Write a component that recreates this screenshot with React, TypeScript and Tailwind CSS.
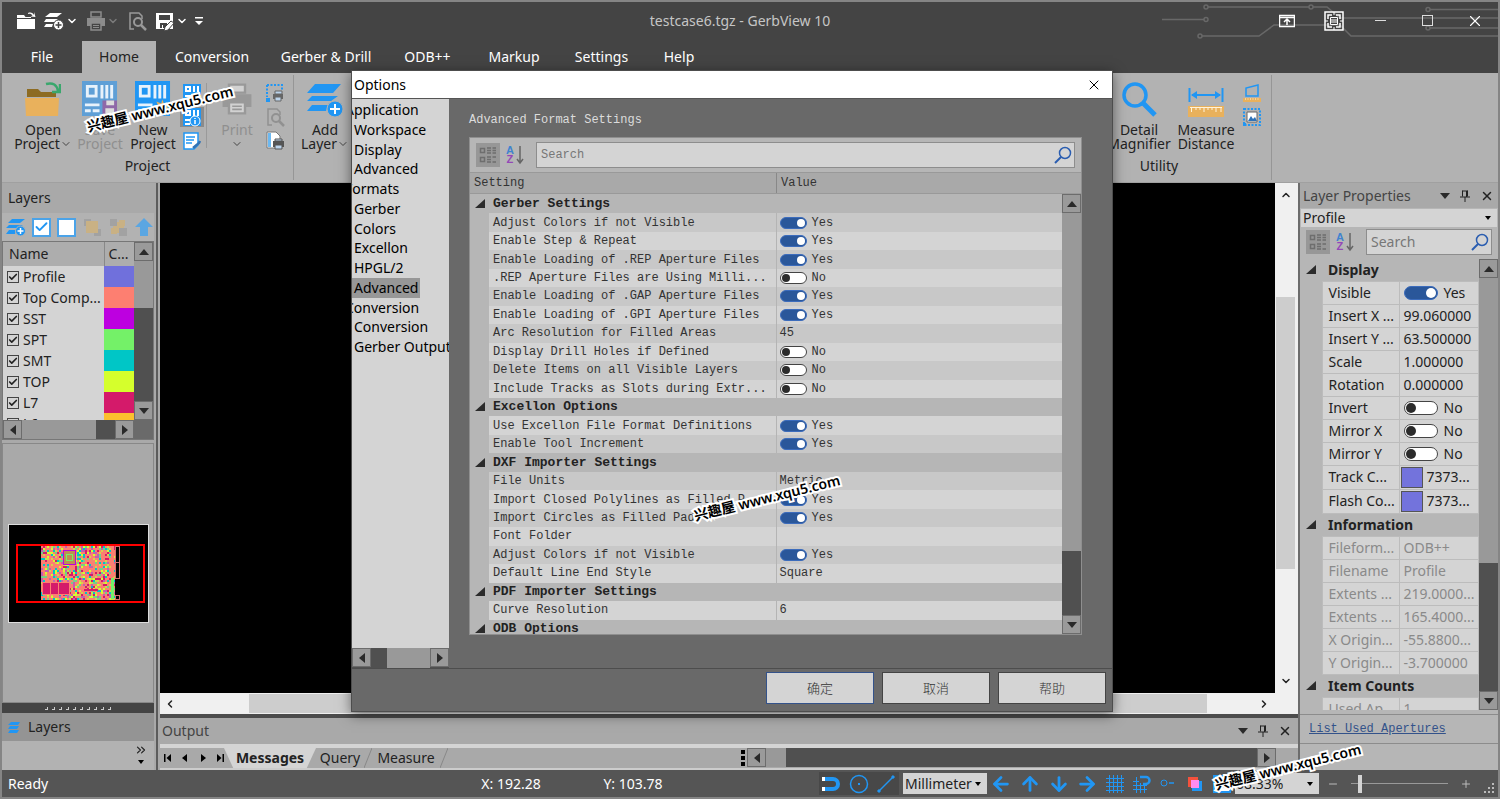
import { PropsWithChildren, ReactNode, useState } from 'react';
import {
  ArrowDown,
  ArrowLeft,
  ArrowRight,
  ArrowUp,
  Check,
  ChevronDown,
  ChevronLeft,
  ChevronRight,
  ChevronsRight,
  ChevronUp,
  Minus,
  Plus,
  X,
} from 'lucide-react';
import { clsx } from 'clsx';

const BLUE = '#2196f3';

const TABS = [
  { label: 'File', className: 'w-20 text-white' },
  { label: 'Home', className: 'w-[74px] bg-[#b2b2b2] text-[#222]' },
  { label: 'Conversion', className: 'w-28 text-white' },
  { label: 'Gerber & Drill', className: 'w-[116px] text-white' },
  { label: 'ODB++', className: 'w-[87px] text-white' },
  { label: 'Markup', className: 'w-[86px] text-white' },
  { label: 'Settings', className: 'w-[89px] text-white' },
  { label: 'Help', className: 'w-[66px] text-white' },
];

const LAYERS = [
  { name: 'Profile', color: 'bg-[#7070dc]' },
  { name: 'Top Comp...', color: 'bg-[#fd7f71]' },
  { name: 'SST', color: 'bg-[#bd00e0]' },
  { name: 'SPT', color: 'bg-[#74f168]' },
  { name: 'SMT', color: 'bg-[#00c6c6]' },
  { name: 'TOP', color: 'bg-[#d5ff2c]' },
  { name: 'L7', color: 'bg-[#d41a6a]' },
  { name: 'L6', color: 'bg-[#fcc02e]' },
];

const TREE = [
  { label: 'Application', root: true },
  { label: 'Workspace' },
  { label: 'Display' },
  { label: 'Advanced' },
  { label: 'Formats', root: true },
  { label: 'Gerber' },
  { label: 'Colors' },
  { label: 'Excellon' },
  { label: 'HPGL/2' },
  { label: 'Advanced', selected: true },
  { label: 'Conversion', root: true },
  { label: 'Conversion' },
  { label: 'Gerber Output' },
];

type Value = string | boolean;
type SettingsGroup = { title: string; rows: [string, Value][] };

const SETTINGS: SettingsGroup[] = [
  {
    title: 'Gerber Settings',
    rows: [
      ['Adjust Colors if not Visible', true],
      ['Enable Step & Repeat', true],
      ['Enable Loading of .REP Aperture Files', true],
      ['.REP Aperture Files are Using Milli...', false],
      ['Enable Loading of .GAP Aperture Files', true],
      ['Enable Loading of .GPI Aperture Files', true],
      ['Arc Resolution for Filled Areas', '45'],
      ['Display Drill Holes if Defined', false],
      ['Delete Items on all Visible Layers', false],
      ['Include Tracks as Slots during Extr...', false],
    ],
  },
  {
    title: 'Excellon Options',
    rows: [
      ['Use Excellon File Format Definitions', true],
      ['Enable Tool Increment', true],
    ],
  },
  {
    title: 'DXF Importer Settings',
    rows: [
      ['File Units', 'Metric'],
      ['Import Closed Polylines as Filled P...', true],
      ['Import Circles as Filled Pads', true],
      ['Font Folder', ''],
      ['Adjust Colors if not Visible', true],
      ['Default Line End Style', 'Square'],
    ],
  },
  { title: 'PDF Importer Settings', rows: [['Curve Resolution', '6']] },
  { title: 'ODB Options', rows: [] },
];

type PropertyGroup = {
  title: string;
  muted?: boolean;
  rows: [string, Value][];
};

const PROPERTIES: PropertyGroup[] = [
  {
    title: 'Display',
    rows: [
      ['Visible', true],
      ['Insert X ...', '99.060000'],
      ['Insert Y ...', '63.500000'],
      ['Scale', '1.000000'],
      ['Rotation', '0.000000'],
      ['Invert', false],
      ['Mirror X', false],
      ['Mirror Y', false],
      ['Track C...', '#7373...'],
      ['Flash Co...', '#7373...'],
    ],
  },
  {
    title: 'Information',
    muted: true,
    rows: [
      ['Fileform...', 'ODB++'],
      ['Filename', 'Profile'],
      ['Extents ...', '219.0000...'],
      ['Extents ...', '165.4000...'],
      ['X Origin...', '-55.8800...'],
      ['Y Origin...', '-3.700000'],
    ],
  },
  { title: 'Item Counts', muted: true, rows: [['Used Ap...', '1']] },
];

export default function App() {
  return (
    <div className="relative flex h-screen w-full flex-col overflow-hidden border-2 border-[#858585] bg-[#a9a9a9] font-['Noto_Sans','Noto_Sans_CJK_SC',sans-serif] text-sm text-[#222]">
      <TitleBar />
      <nav className="flex h-8 shrink-0 bg-[#444]">
        {TABS.map(({ label, className }) => (
          <button key={label} type="button" className={className}>
            {label}
          </button>
        ))}
      </nav>
      <Ribbon />
      <div className="flex min-h-0 flex-1">
        <LayersPanel />
        <Workspace />
        <PropertiesPanel />
      </div>
      <StatusBar />
      <OptionsDialog />
      <Watermark className="left-[83px] top-[95px]" />
      <Watermark className="left-[690px] top-[484px]" />
      <Watermark className="left-[1211px] top-[753px]" />
    </div>
  );
}

function Watermark({ className }: { className: string }) {
  return (
    <span
      className={clsx(
        'pointer-events-none absolute -rotate-[14deg] whitespace-nowrap text-sm leading-6 font-semibold text-black [-webkit-text-stroke:4px_white] [paint-order:stroke]',
        className
      )}>
      兴趣屋 www.xqu5.com
    </span>
  );
}

/* ---------- title bar ---------- */

function TitleBar() {
  return (
    <header className="relative flex h-[39px] shrink-0 items-center bg-[#444] pb-0.5 text-white">
      <svg
        aria-hidden="true"
        className="absolute right-0 top-0 h-[39px] w-[340px]"
        viewBox="1158 2 340 39"
        fill="none"
        stroke="#686868"
        strokeWidth="1.5">
        <path d="M1162 19.5H1204M1208 7H1309M1313 7H1327L1340 18H1498M1202 36H1259L1274 25H1340L1351 36H1498M1430 9.5H1498M1430 28H1498" />
        <circle cx="1206" cy="19.5" r="2" />
        <circle cx="1206" cy="7" r="2" />
        <circle cx="1311" cy="7" r="2" />
        <circle cx="1200" cy="36" r="2" />
        <circle cx="1428" cy="9.5" r="2" />
        <circle cx="1428" cy="28" r="2" />
      </svg>

      <div className="flex items-center pl-3.5">
        <QuickButton label="Open" className="w-5">
          <svg className="h-5 w-5" viewBox="0 0 20 20" fill="#fff">
            <path d="M1 18V8h18v10zM1 7V4h7l1.500 2H15v1z" />
            <path d="M12 2c3-1 5 0 6 2V1l1.500 5-5-.5 2-1C15.500 3 14 2.500 12 3z" />
          </svg>
        </QuickButton>
        <QuickButton label="Add layer" className="ml-2 w-5">
          <svg className="h-5 w-5" viewBox="0 0 20 20" fill="#fff">
            <path d="M6 2h12l-5 4H1zM2 8h12l-3 3H0zM2 13h7l-1 3H0z" />
            <circle cx="14.500" cy="14" r="5" stroke="#444" />
            <path d="M14.500 11v6M11.500 14h6" stroke="#444" strokeWidth="1.500" />
          </svg>
        </QuickButton>
        <ChevronDown className="ml-0.5 h-3 w-3" strokeWidth={3} />
        <QuickButton label="Print" className="ml-2 w-5">
          <PrinterIcon className="h-5 w-5" color="#8c8c8c" />
        </QuickButton>
        <ChevronDown className="ml-px h-3 w-3 text-[#7a7a7a]" strokeWidth={3} />
        <QuickButton label="Preview" className="ml-2 w-5">
          <PreviewIcon className="h-5 w-5" color="#999" />
        </QuickButton>
        <QuickButton label="Save as" className="ml-2 w-5">
          <svg className="h-5 w-5" viewBox="0 0 20 20">
            <path d="M1 2h17v16H1z" fill="#fff" />
            <path d="M4 4h11v5H4zM5 12h7v5H8v-3H7v3H5z" fill="#444" />
            <path d="M16 10l3 2-6 7-4 1 1-4z" fill="#fff" stroke="#444" />
          </svg>
        </QuickButton>
        <ChevronDown className="ml-px h-3 w-3" strokeWidth={3} />
        <svg className="ml-1.5 h-2.5 w-2.5" viewBox="0 0 10 10" fill="#fff">
          <path d="M1 1h8v1.500H1zM1 5h8L5 9z" />
        </svg>
      </div>

      <h1 className="absolute inset-x-0 pr-5 text-center text-sm text-[#c6c6c6]">
        testcase6.tgz - GerbView 10
      </h1>

      <div className="relative ml-auto flex items-center">
        <WindowButton label="Toggle ribbon">
          <svg className="h-4 w-4" viewBox="0 0 16 16" stroke="#fff" fill="none">
            <path d="M.5 2.500h15v11H.5zM0 4.500h16" strokeWidth="1.500" />
            <path d="M8 12V7M5 9l3-3 3 3" strokeWidth="1.500" />
          </svg>
        </WindowButton>
        <WindowButton label="Full screen">
          <svg className="h-5 w-5" viewBox="0 0 20 20" stroke="#fff" fill="none">
            <path d="M1 1h18v18H1z" strokeWidth="1.500" />
            <path d="M4 8V4h4M12 4h4v4M16 12v4h-4M8 16H4v-4" strokeWidth="1.500" />
            <path d="M6.500 6.500h7v7h-7zM7 9h6M7 11h6" />
            <path d="M10 1v3M10 16v3M1 10h3M16 10h3" />
          </svg>
        </WindowButton>
        <WindowButton label="Minimize">
          <span className="h-px w-[11px] bg-[#ddd]" />
        </WindowButton>
        <WindowButton label="Maximize">
          <span className="h-[11px] w-[11px] border border-[#ddd]" />
        </WindowButton>
        <WindowButton label="Close">
          <X className="h-4.5 w-4.5" strokeWidth={1.5} />
        </WindowButton>
      </div>
    </header>
  );
}

type LabelledProps = PropsWithChildren<{ label: string; className?: string }>;

function QuickButton({ label, className, children }: LabelledProps) {
  return (
    <button type="button" aria-label={label} className={className}>
      {children}
    </button>
  );
}

function WindowButton({ label, children }: LabelledProps) {
  return (
    <button
      type="button"
      aria-label={label}
      className="flex h-9 w-[47px] items-center justify-center">
      {children}
    </button>
  );
}

/* ---------- ribbon ---------- */

function Ribbon() {
  return (
    <div className="flex h-[110px] shrink-0 border-b border-[#a0a0a0] bg-[#b2b2b2]">
      <RibbonGroup label="Project" className="w-[292px]">
        <div className="flex h-full pl-3">
          <BigButton lines={['Open', 'Project']} chevron className="w-[58px]">
            <svg className="h-9 w-9" viewBox="0 0 36 36">
              <path d="M2 16V8h11l3 3h15v5z" fill="#8d6b22" />
              <path d="M0 17h34l-1 18H1z" fill="#e9b15c" />
              <path d="M21 3c7-2 11 1 12 7M35 3v8h-8" stroke="#3aa76d" strokeWidth="2.500" fill="none" />
            </svg>
          </BigButton>
          <BigButton lines={['Save', 'Project']} disabled className="w-14">
            <BoardIcon color="#5f9fd6">
              <path d="M21 20h15v15H21z" fill="#8f68a8" />
              <path d="M25 20h8v5h-8zM24 28h9v6h-9z" fill="#ddd" />
            </BoardIcon>
          </BigButton>
          <BigButton lines={['New', 'Project']} className="w-[50px]">
            <BoardIcon color={BLUE}>
              <path d="M28 19l2 5 5-2-2 5 4 2-5 2v5l-4-4-5 3 1-5-5-2 5-2-2-5 5 2z" fill="#e9b15c" />
            </BoardIcon>
          </BigButton>
          <div className="flex w-7 flex-col items-center gap-1 pt-2">
            <SmallButton label="Project files">
              <MiniBoard>
                <path d="M10 11h4l1 1h4v6h-9z" fill="#e9b15c" />
              </MiniBoard>
            </SmallButton>
            <SmallButton label="Project information" active>
              <MiniBoard>
                <circle cx="13" cy="14" r="5" fill={BLUE} stroke="#fff" />
                <path d="M13 11v1M13 13v4" stroke="#fff" strokeWidth="1.500" />
              </MiniBoard>
            </SmallButton>
            <SmallButton label="Edit report">
              <svg className="h-5 w-5" viewBox="0 0 20 20" fill="none">
                <path d="M2 2h14v12l-4 4H2z" fill="#fff" stroke={BLUE} strokeWidth="1.500" />
                <path d="M4 6h9M4 9h8M4 12h6" stroke={BLUE} strokeWidth="1.500" />
                <path d="M11 17l6-5 1-2" stroke="#3273b5" strokeWidth="2.500" />
              </svg>
            </SmallButton>
          </div>
          <div className="my-2 w-px bg-[#9a9a9a]" />
          <BigButton lines={['Print', '']} chevron disabled className="w-[60px]">
            <PrinterIcon className="h-8 w-8" color="#999" paper="#d2d2d2" />
          </BigButton>
          <div className="flex w-4 flex-col items-center gap-1 pt-2">
            <SmallButton label="Print area">
              <svg className="h-5 w-5" viewBox="0 0 20 20" fill="none">
                <path d="M2 2h15v5M2 2v12" stroke={BLUE} strokeWidth="2" strokeDasharray="2 1.500" />
                <path d="M1 15h4v4H1z" fill={BLUE} />
                <path d="M8 11h10v5H8z" fill="#666" />
                <path d="M10 8h7v3h-7zM10 14h6v4h-6z" fill="#bcd4ec" stroke="#666" />
              </svg>
            </SmallButton>
            <SmallButton label="Print preview">
              <PreviewIcon className="h-5 w-5" color="#919191" />
            </SmallButton>
            <SmallButton label="Print page">
              <svg className="h-5 w-5" viewBox="0 0 20 20" fill="none">
                <path d="M2 1h9l4 4v12H2z" fill="#fff" stroke="#777" />
                <path d="M3 2h3v14H3z" fill="#6cb8f0" />
                <path d="M8 10h11v6H8z" fill="#555" />
                <path d="M10 8h7v2h-7zM10 14h7v4h-7z" fill="#bcd4ec" stroke="#555" />
              </svg>
            </SmallButton>
          </div>
        </div>
      </RibbonGroup>

      <RibbonGroup label="" className="w-[753px]">
        <BigButton lines={['Add', 'Layer']} chevron className="w-[62px]">
          <svg className="h-9 w-9" viewBox="0 0 36 36" fill={BLUE}>
            <path d="M8 3h26l-8 9H0zM5 15h26l-7 5H0zM5 24h16l-2 6H0z" />
            <circle cx="28" cy="28" r="8" stroke="#b2b2b2" />
            <path d="M28 23v10M23 28h10" stroke="#fff" strokeWidth="2" />
          </svg>
        </BigButton>
      </RibbonGroup>

      <RibbonGroup label="Utility" className="w-[225px]">
        <div className="flex h-full justify-end pr-1.5">
          <BigButton lines={['Detail', 'Magnifier']} className="w-[68px]">
            <svg className="h-9 w-9" viewBox="0 0 36 36" fill="none" stroke={BLUE}>
              <circle cx="14" cy="14" r="11" strokeWidth="3.500" />
              <path d="M22 22l12 12" strokeWidth="5" />
            </svg>
          </BigButton>
          <BigButton lines={['Measure', 'Distance']} className="w-[66px]">
            <svg className="h-9 w-9" viewBox="0 0 36 36" fill="none">
              <path d="M1.500 7v14M34.500 7v14M4 14h28" stroke={BLUE} strokeWidth="2" />
              <path d="M3 14l6-4v8zM33 14l-6-4v8z" fill={BLUE} />
              <path d="M0 25h36v11H0z" fill="#e9b15c" />
              <path d="M2 26.500h32M3.500 26v5M8 26v3M12 26v3M16 26v5M20 26v3M24 26v3M28 26v5M33 26v5" stroke="#fff3dc" />
            </svg>
          </BigButton>
          <div className="flex w-[26px] flex-col items-center gap-1 pt-2">
            <SmallButton label="Measure area">
              <svg className="h-5 w-5" viewBox="0 0 20 20" fill="none">
                <path d="M4 13V5l12-3v11z" stroke={BLUE} strokeWidth="1.500" />
                <path d="M1 15h18v4H1z" fill="#e9b15c" />
                <path d="M3 16h14" stroke="#fff3dc" strokeDasharray="1 1.500" />
              </svg>
            </SmallButton>
            <SmallButton label="Capture region">
              <svg className="h-5 w-5" viewBox="0 0 20 20" fill="none">
                <path d="M2 2h16v16H2z" stroke={BLUE} strokeWidth="2" strokeDasharray="2 1.500" />
                <path d="M5 5h10v10H5z" fill="#fff" stroke="#666" />
                <path d="M6 14l3-5 2 3 2-2 2 4z" fill="#2f73b8" />
                <path d="M1 16h3v3H1z" fill={BLUE} />
              </svg>
            </SmallButton>
          </div>
        </div>
      </RibbonGroup>
    </div>
  );
}

function RibbonGroup({ label, className, children }: LabelledProps) {
  return (
    <section
      className={clsx(
        'my-0.5 flex shrink-0 flex-col border-r border-[#969696]',
        className
      )}>
      <div className="h-[81px]">{children}</div>
      <h2 className="text-center leading-5">{label}</h2>
    </section>
  );
}

type BigButtonProps = PropsWithChildren<{
  lines: [string, string];
  chevron?: boolean;
  disabled?: boolean;
  className: string;
}>;

function BigButton({
  lines,
  chevron,
  disabled,
  className,
  children,
}: BigButtonProps) {
  return (
    <button
      type="button"
      disabled={disabled}
      className={clsx(
        'flex shrink-0 flex-col items-center pt-1.5 leading-3.5 whitespace-nowrap',
        disabled && 'text-[#8f8f8f]',
        className
      )}>
      <span className="flex h-9 items-center">{children}</span>
      <span className="mt-1.5">{lines[0]}</span>
      <span className="flex h-3.5 items-center">
        {lines[1]}
        {chevron && <ChevronDown className="h-3 w-3 text-[#444]" />}
      </span>
    </button>
  );
}

function SmallButton({
  label,
  active,
  children,
}: LabelledProps & { active?: boolean }) {
  return (
    <button
      type="button"
      aria-label={label}
      className={clsx('shrink-0', active && 'bg-[#8b8b8b] px-0.5')}>
      {children}
    </button>
  );
}

function BoardIcon({ color, children }: PropsWithChildren<{ color: string }>) {
  return (
    <svg className="h-9 w-9" viewBox="0 0 37 37">
      <path d="M0 0h36v36H0z" fill={color} />
      <path d="M4 4h12v13H4zM19 4h3v14h-3zM24 4h3v14h-3zM29 4h3v14h-3zM3 23h15v3H3zM3 29h6v3H3zM11 29h7v3h-7z" fill="#e8f2fb" />
      <path d="M7 7h6v7H7z" fill={color} />
      {children}
    </svg>
  );
}

function MiniBoard({ children }: PropsWithChildren) {
  return (
    <svg className="h-5 w-5" viewBox="0 0 20 20">
      <path d="M1 1h18v18H1z" fill={BLUE} />
      <path d="M3 3h6v6H3zM11 3h2v6h-2zM15 3h2v6h-2zM3 12h7v2H3zM3 16h5v2H3z" fill="#fff" />
      <path d="M5 5h2v2H5z" fill={BLUE} />
      {children}
    </svg>
  );
}

type GlyphProps = { className: string; color: string; paper?: string };

function PrinterIcon({ className, color, paper = '#444' }: GlyphProps) {
  return (
    <svg className={className} viewBox="0 0 20 20">
      <path d="M5 1h10v5H5z" fill={paper} stroke={color} strokeWidth="1.500" />
      <path d="M1 7h18v8H1z" fill={color} />
      <path d="M5 12h10v7H5z" fill={paper} stroke={color} strokeWidth="1.500" />
      <path d="M7 14.500h6M7 16.500h6" stroke={color} />
    </svg>
  );
}

function PreviewIcon({ className, color }: GlyphProps) {
  return (
    <svg className={className} viewBox="0 0 20 20" fill="none" stroke={color}>
      <path d="M7 18H3V2h9l3 3v3" strokeWidth="1.500" />
      <circle cx="11" cy="11" r="4" strokeWidth="2" />
      <path d="M14 14l5 5" strokeWidth="2.500" />
    </svg>
  );
}

/* ---------- shared widgets ---------- */

type Direction = 'up' | 'down' | 'left' | 'right';

const TRIANGLES: Record<Direction, string> = {
  up: 'M0 8L5 2l5 6z',
  down: 'M0 2l5 6 5-6z',
  left: 'M8 0L2 5l6 5z',
  right: 'M2 0l6 5-6 5z',
};

function Triangle({ dir }: { dir: Direction }) {
  return (
    <svg className="h-2.5 w-2.5" viewBox="0 0 10 10" fill="#2a2a2a">
      <path d={TRIANGLES[dir]} />
    </svg>
  );
}

function ScrollButton({ dir }: { dir: Direction }) {
  return (
    <button
      type="button"
      aria-label={`Scroll ${dir}`}
      className="flex h-[19px] w-[19px] shrink-0 items-center justify-center border border-[#6c6c6c] bg-[#9a9a9a]">
      <Triangle dir={dir} />
    </button>
  );
}

type ScrollBarProps = { vertical?: boolean; thumb: string; className?: string };

function ScrollBar({ vertical, thumb, className }: ScrollBarProps) {
  return (
    <div
      className={clsx(
        'flex shrink-0 bg-[#505050]',
        vertical ? 'w-[19px] flex-col' : 'h-[19px]',
        className
      )}>
      <ScrollButton dir={vertical ? 'up' : 'left'} />
      <div className="min-h-0 min-w-0 flex-1">
        <div className={clsx('bg-[#999]', thumb)} />
      </div>
      <ScrollButton dir={vertical ? 'down' : 'right'} />
    </div>
  );
}

type SwitchProps = { label: string; initial: boolean; large?: boolean };

function Switch({ label, initial, large }: SwitchProps) {
  const [on, setOn] = useState(initial);

  return (
    <span className="flex items-center">
      <input
        type="checkbox"
        role="switch"
        aria-label={label}
        checked={on}
        onChange={(e) => setOn(e.target.checked)}
        className={clsx(
          'flex shrink-0 appearance-none items-center rounded-full border border-[#444] bg-white px-px before:rounded-full before:bg-[#2b2b2b] checked:justify-end checked:border-[#3c6cbc] checked:bg-[#2a579a] checked:before:bg-white',
          large
            ? 'mr-1.5 h-3.5 w-[34px] before:h-2.5 before:w-2.5'
            : 'mr-[5px] h-3 w-[27px] before:h-2 before:w-2'
        )}
      />
      {on ? 'Yes' : 'No'}
    </span>
  );
}

function GridToolbar({ id }: { id: string }) {
  return (
    <>
      <button
        type="button"
        aria-label="Categorized"
        className="flex h-6 w-6 shrink-0 items-center justify-center bg-[#979797]">
        <svg className="h-4.5 w-4.5" viewBox="0 0 18 18" fill="none" stroke="#6e6e6e">
          <path d="M1.500 2.500h4v4h-4zM1.500 11.500h4v4h-4z" strokeWidth="1.500" />
          <path d="M8 2h4M8 4.500h4M8 7h4M8 11h4M8 13.500h4M8 16h4M13.500 2H17M13.500 4.500H17M13.500 7H17M13.500 11H17M13.500 16H17" strokeWidth="1.500" />
        </svg>
      </button>
      <button
        type="button"
        aria-label="Sort alphabetically"
        className="ml-1.5 flex h-6 w-5 shrink-0 items-center">
        <span className="flex flex-col font-['Liberation_Sans',sans-serif] text-[11px] leading-[9px] font-bold">
          <span className="text-[#3f83cf]">A</span>
          <span className="text-[#9447b8]">Z</span>
        </span>
        <svg className="ml-0.5 h-5 w-2" viewBox="0 0 8 20" fill="none" stroke="#666">
          <path d="M4 1v17M1 14l3 4 3-4" strokeWidth="1.500" />
        </svg>
      </button>
      <div className="ml-2.5 flex h-[26px] min-w-0 flex-1 items-center border border-[#8d8d8d] bg-[#d4d4d4] pr-0.5">
        <input
          id={id}
          aria-label="Search"
          placeholder="Search"
          className="w-0 min-w-0 flex-1 bg-transparent px-1 outline-none placeholder:text-[#777]"
        />
        <svg className="h-[18px] w-[18px] shrink-0" viewBox="0 0 18 18" fill="none" stroke="#2a5db0">
          <circle cx="11" cy="7" r="5.500" strokeWidth="1.500" />
          <path d="M7 11l-6 6" strokeWidth="2" />
        </svg>
      </div>
    </>
  );
}

function Expander() {
  return (
    <svg className="mx-auto h-2.5 w-2.5" viewBox="0 0 10 10" fill="#2b2b2b">
      <path d="M10 0v9H0z" />
    </svg>
  );
}

function PaneButtons() {
  return (
    <div className="ml-auto flex items-center gap-2.5 text-[#222]">
      <button type="button" aria-label="Pane menu">
        <Triangle dir="down" />
      </button>
      <button type="button" aria-label="Pin">
        <svg className="h-3 w-2.5" viewBox="0 0 10 12" fill="none" stroke="#222">
          <path d="M2.500 .5v6M7.500 .5v6M2.500 1h5M0 7h10M5 7v5M6.500 1v6" />
        </svg>
      </button>
      <button type="button" aria-label="Close pane">
        <X className="h-3.5 w-3.5" strokeWidth={2.5} />
      </button>
    </div>
  );
}

/* ---------- layers panel ---------- */

function LayersPanel() {
  return (
    <aside className="flex w-[156px] shrink-0 flex-col border-r-2 border-[#5c5c5c] pr-0.5">
      <h2 className="h-[30px] shrink-0 pl-1.5 leading-[30px]">Layers</h2>
      <div className="flex h-7 shrink-0 items-center justify-between bg-[#b2b2b2] pl-1">
        <button type="button" aria-label="Add layer">
          <svg className="h-5 w-5" viewBox="0 0 20 20" fill={BLUE}>
            <path d="M6 2h13l-5 4H2zM3 8h14l-5 3H0zM3 13h7l-1 4H0z" />
            <circle cx="14.500" cy="14" r="5" stroke="#b2b2b2" />
            <path d="M14.500 11v6M11.500 14h6" stroke="#fff" strokeWidth="1.500" />
          </svg>
        </button>
        <button
          type="button"
          aria-label="Show all"
          className="flex h-[19px] w-[19px] items-center justify-center border-2 border-[#4ba3e8] bg-white">
          <Check className="h-4 w-4 text-[#2196f3]" strokeWidth={3} />
        </button>
        <button
          type="button"
          aria-label="Hide all"
          className="h-[19px] w-[19px] border-2 border-[#4ba3e8] bg-white"
        />
        <button type="button" aria-label="Bring to front">
          <svg className="h-5 w-5" viewBox="0 0 20 20">
            <path d="M2 2h7v7H2zM12 12h7v7h-7z" fill="#a2a2a2" />
            <path d="M4 4h12v12H4z" fill="#c9b184" />
          </svg>
        </button>
        <button type="button" aria-label="Send to back">
          <svg className="h-5 w-5" viewBox="0 0 20 20">
            <path d="M5 5h11v11H5z" fill="#c9b184" />
            <path d="M2 2h7v7H2zM11 11h8v8h-8z" fill="#a2a2a2" />
            <path d="M11 3h6v6h-6zM3 11h6v6H3z" fill="#c9b184" />
          </svg>
        </button>
        <button type="button" aria-label="Move up">
          <svg className="h-5 w-5" viewBox="0 0 20 20" fill="#5aa6e2">
            <path d="M10 1l9 9h-5v9H6v-9H1z" />
          </svg>
        </button>
      </div>

      <div className="flex h-[179px] shrink-0 overflow-hidden border-x border-t border-[#777]">
        <div className="min-w-0 flex-1 bg-[#d4d4d4]">
          <table className="w-full table-fixed border-collapse text-left">
            <thead>
              <tr className="h-6 bg-[#adadad]">
                <th className="pl-1.5 font-normal">Name</th>
                <th className="w-[30px] border-l border-[#888] pl-1 font-normal">
                  C...
                </th>
              </tr>
            </thead>
            <tbody>
              {LAYERS.map(({ name, color }) => (
                <tr key={name} className="h-[21px]">
                  <td className="py-0 pl-1 whitespace-nowrap">
                    <LayerCheck name={name} />
                  </td>
                  <td className={color} />
                </tr>
              ))}
            </tbody>
          </table>
        </div>
        <ScrollBar vertical thumb="h-1/3" />
      </div>
      <div className="flex shrink-0 border-x border-b border-[#777] bg-[#6a6a6a]">
        <ScrollBar thumb="h-full w-4/5" className="flex-1" />
        <div className="w-[19px]" />
      </div>

      <div className="mt-[3px] flex min-h-0 flex-1 items-center justify-center border border-[#888]">
        <BoardPreview />
      </div>
      <div className="flex h-2.5 shrink-0 items-center justify-center gap-1 bg-[#444]">
        {Array.from({ length: 10 }, (_, i) => (
          <i key={i} className="h-[3px] w-[3px] border-r border-b border-[#ccc]" />
        ))}
      </div>
      <button
        type="button"
        className="flex h-7 shrink-0 items-center gap-2 bg-[#949494] pl-1.5">
        <svg className="h-3 w-3" viewBox="0 0 12 12" fill={BLUE}>
          <path d="M3 1h9l-2 3H0zM2 5h9L9 8H0zM2 9h9l-2 3H0z" />
        </svg>
        Layers
      </button>
      <div className="flex h-[29px] shrink-0 flex-col items-end bg-[#b2b2b2] pt-0.5 pr-1.5">
        <ChevronsRight className="h-3.5 w-3.5" />
        <svg className="mt-0.5 mr-1 h-1.5 w-1.5" viewBox="0 0 6 6">
          <path d="M0 1h6L3 5z" />
        </svg>
      </div>
    </aside>
  );
}

function LayerCheck({ name }: { name: string }) {
  const [checked, setChecked] = useState(true);

  return (
    <label className="relative flex items-center gap-1 leading-5">
      <input
        type="checkbox"
        checked={checked}
        onChange={(e) => setChecked(e.target.checked)}
        className="h-3 w-3 shrink-0 appearance-none border border-[#444]"
      />
      {checked && (
        <Check
          className="pointer-events-none absolute left-px h-2.5 w-2.5"
          strokeWidth={4}
        />
      )}
      {name}
    </label>
  );
}

const PCB_COLORS = ['#fd7f71', '#fd7f71', '#fd7f71', '#fd7f71', '#f08a70', '#d5d34c', '#d5ff2c', '#74d188', '#00c6c6', '#c060b0', '#fd7f71', '#d41a6a'];

const PCB_CELLS = Array.from({ length: 37 * 27 }, (_, i) => {
  const noise = Math.abs(Math.sin(i * 12.9898) * 43758.5453) % 1;
  return {
    x: 32 + (i % 37) * 2,
    y: 21 + Math.floor(i / 37) * 2,
    fill: PCB_COLORS[Math.floor(noise * PCB_COLORS.length)],
  };
});

function BoardPreview() {
  return (
    <svg
      className="h-[99px] w-[141px] border border-[#ddd] bg-black"
      viewBox="0 0 139 97"
      shapeRendering="crispEdges"
      fill="none">
      {PCB_CELLS.map(({ x, y, fill }) => (
        <rect key={`${x}-${y}`} x={x} y={y} width="2" height="2" fill={fill} />
      ))}
      <path d="M33.500 57.500h27v12h-27z" fill="#d41a6a" stroke="#fd7f71" />
      <path d="M41.500 58v12M49.500 58v12" stroke="#fd7f71" />
      <path d="M54.500 25.500h12v14h-12z" fill="#bd9050" stroke="#bd00e0" />
      <path d="M57.500 29.500h6v6h-6z" stroke="#74f168" />
      <path d="M75 64h14v2H75z" fill="#d41a6a" />
      <path d="M102 21h3v31h-3z" fill="#fd7f71" />
      <path d="M102 53h3v21h-3z" fill="#74f168" />
      <path d="M106.500 21.500h4v32h-4zM107 37.500h4M106.500 70.500h4v4h-4z" stroke="#d4706c" />
      <path d="M8 20h127v57H8z" stroke="#f00" strokeWidth="2" />
    </svg>
  );
}

/* ---------- drawing area and output ---------- */

function Workspace() {
  return (
    <main className="ml-0.5 flex min-w-0 flex-1 flex-col">
      <div className="flex min-h-0 flex-1">
        <div className="min-w-0 flex-1 bg-black" />
        <div className="flex w-[23px] flex-col items-center bg-[#f0f0f0] py-1.5 pr-0.5">
          <ChevronUp className="h-3 w-3" strokeWidth={3} />
          <div className="mt-24 mb-[106px] w-[19px] flex-1 bg-[#cdcdcd]" />
          <ChevronDown className="h-3 w-3" strokeWidth={3} />
        </div>
      </div>
      <div className="flex h-[21px] shrink-0 items-center bg-[#f0f0f0] pr-7 pl-1">
        <ChevronLeft className="h-3 w-3" strokeWidth={3} />
        <div className="mr-[51px] ml-[73px] h-[19px] flex-1 bg-[#cdcdcd]" />
        <ChevronRight className="h-3 w-3" strokeWidth={3} />
      </div>

      <section className="shrink-0 border-t-4 border-[#4c4c4c]">
        <div className="flex h-[26px] items-center pr-1.5 pl-0.5 text-[#444]">
          Output
          <PaneButtons />
        </div>
        <div className="h-1 bg-[#d4d4d4]" />
        <div className="flex h-[22px] items-start border-b-2 border-[#ccc]">
          <div className="flex w-16 items-center justify-between py-1.5 pl-1">
            <svg className="h-2 w-2" viewBox="0 0 8 8">
              <path d="M0 0h1.500v8H0zM7 0v8L2.500 4z" />
            </svg>
            <svg className="h-2 w-2" viewBox="0 0 8 8">
              <path d="M6 0v8L1 4z" />
            </svg>
            <svg className="h-2 w-2" viewBox="0 0 8 8">
              <path d="M2 0v8l5-4z" />
            </svg>
            <svg className="h-2 w-2" viewBox="0 0 8 8">
              <path d="M6.500 0H8v8H6.500zM1 0v8l4.500-4z" />
            </svg>
          </div>
          <button
            type="button"
            className="h-5 w-[92px] bg-[#d4d4d4] font-bold leading-5 [clip-path:polygon(0_0,100%_0,90%_100%,10%_100%)]">
            Messages
          </button>
          <button type="button" className="h-5 w-12 leading-5">
            Query
          </button>
          <svg className="h-5 w-2" viewBox="0 0 8 20" fill="none">
            <path d="M8 0L0 20" stroke="#888" />
          </svg>
          <button type="button" className="h-5 w-[68px] leading-5">
            Measure
          </button>
          <svg className="h-5 w-2" viewBox="0 0 8 20" fill="none">
            <path d="M8 0L0 20" stroke="#888" />
          </svg>
          <div className="ml-auto flex w-[47%] items-center">
            <svg className="h-4 w-1.5 shrink-0" viewBox="0 0 6 16">
              <path d="M0 0h4v4H0zM0 6h4v4H0zM0 12h4v4H0z" />
            </svg>
            <ScrollBar thumb="h-full w-5" className="flex-1" />
          </div>
          <div className="w-[22px] shrink-0" />
        </div>
      </section>
    </main>
  );
}

/* ---------- layer properties ---------- */

function PropertiesPanel() {
  return (
    <aside className="flex w-[200px] shrink-0 flex-col border-l-2 border-[#6c6c6c] bg-[#b6b6b6]">
      <div className="flex h-[25px] shrink-0 items-center bg-[#a9a9a9] pr-1 pl-[3px] text-[#444]">
        <h2 className="whitespace-nowrap">Layer Properties</h2>
        <PaneButtons />
      </div>
      <div className="relative mx-px mt-px shrink-0">
        <select
          aria-label="Layer"
          className="block h-[18px] w-full appearance-none bg-[#d4d4d4] pl-0.5 leading-[18px]">
          <option>Profile</option>
        </select>
        <SelectArrow />
      </div>
      <div className="flex h-[30px] shrink-0 items-center px-1.5">
        <GridToolbar id="property-search" />
      </div>

      <div className="mt-0.5 flex min-h-0 flex-1 overflow-hidden">
        <div className="min-w-0 flex-1 overflow-hidden">
          <table className="h-[462px] w-full table-fixed border-collapse text-left">
            <colgroup>
              <col className="w-[22px]" />
              <col className="w-[77px]" />
              <col />
            </colgroup>
            {PROPERTIES.map(({ title, rows, muted }) => (
              <tbody key={title}>
                <tr>
                  <td className="p-0">
                    <Expander />
                  </td>
                  <th colSpan={2} className="p-0 pl-1.5 leading-5">
                    {title}
                  </th>
                </tr>
                {rows.map(([name, value], i) => (
                  <tr key={i} className={clsx(muted && 'text-[#8a8a8a]')}>
                    <td className="p-0" />
                    <td className="border border-[#bcbcbc] bg-[#d4d4d4] p-0 pl-1.5 leading-5 whitespace-nowrap">
                      {name}
                    </td>
                    <td className="border border-[#bcbcbc] bg-[#d4d4d4] p-0 pl-1 leading-5 whitespace-nowrap">
                      <PropertyValue name={name} value={value} />
                    </td>
                  </tr>
                ))}
              </tbody>
            ))}
          </table>
        </div>
        <ScrollBar vertical thumb="h-[69%]" />
      </div>

      <div className="mt-1 flex h-[30px] shrink-0 items-center border-y border-[#8c8c8c] pl-[9px]">
        <a
          href="#apertures"
          className="font-['Liberation_Mono',monospace] text-xs text-[#33528a] underline">
          List Used Apertures
        </a>
      </div>
      <div className="h-[26px] shrink-0" />
    </aside>
  );
}

function PropertyValue({ name, value }: { name: string; value: Value }): ReactNode {
  if (typeof value === 'boolean')
    return <Switch label={name} initial={value} large />;

  if (value.startsWith('#'))
    return (
      <span className="-ml-1 flex items-center gap-1 pl-px">
        <i className="h-[21px] w-[22px] border border-[#555] bg-[#7373dc]" />
        {value.slice(1)}
      </span>
    );

  return value;
}

function SelectArrow() {
  return (
    <svg
      className="pointer-events-none absolute top-1/2 right-1.5 h-1.5 w-1.5 -translate-y-1/2"
      viewBox="0 0 6 6">
      <path d="M0 1h6L3 5z" />
    </svg>
  );
}

/* ---------- status bar ---------- */

function StatusBar() {
  return (
    <footer className="flex h-[27px] shrink-0 items-center bg-[#555] text-white">
      <span className="w-[446px] pl-1.5">Ready</span>
      <span className="w-[126px] text-center">X: 192.28</span>
      <span className="w-[118px] text-center">Y: 103.78</span>
      <div className="ml-[127px] flex h-[23px] w-20 items-center justify-around bg-[#484848]">
        <StatusButton label="Snap">
          <path d="M2 5h9a5 5 0 010 10H2" strokeWidth="4" />
          <path d="M0 5h3M0 15h3" stroke="#fff" strokeWidth="4" />
        </StatusButton>
        <StatusButton label="Snap to center">
          <circle cx="10" cy="10" r="8.500" />
          <path d="M9 10h2" strokeWidth="2" />
        </StatusButton>
        <StatusButton label="Snap to line">
          <path d="M3 17L17 3" />
          <path d="M2 18l2-2M16 4l2-2" strokeWidth="3" />
        </StatusButton>
      </div>
      <div className="relative ml-1">
        <select
          aria-label="Units"
          className="block h-[21px] w-[84px] appearance-none bg-[#d4d4d4] pl-0.5 text-[#222]">
          <option>Millimeter</option>
        </select>
        <SelectArrow />
      </div>
      <div className="flex w-[248px] justify-around text-[#2196f3]">
        <button type="button" aria-label="Pan left">
          <ArrowLeft className="h-[22px] w-[22px]" strokeWidth={3} />
        </button>
        <button type="button" aria-label="Pan up">
          <ArrowUp className="h-[22px] w-[22px]" strokeWidth={3} />
        </button>
        <button type="button" aria-label="Pan down">
          <ArrowDown className="h-[22px] w-[22px]" strokeWidth={3} />
        </button>
        <button type="button" aria-label="Pan right">
          <ArrowRight className="h-[22px] w-[22px]" strokeWidth={3} />
        </button>
        <StatusButton label="Grid">
          <path d="M1 4.500h18M1 8.500h18M1 12.500h18M1 16.500h18M4.500 1v18M8.500 1v18M12.500 1v18M16.500 1v18" strokeWidth="1" />
        </StatusButton>
        <StatusButton label="Snap to grid">
          <path d="M1 7.500h6M1 11.500h14M1 15.500h14M4.500 3v16M8.500 9v10M12.500 12v7" strokeWidth="1" />
          <path d="M8 3h6a3.500 3.500 0 010 7h-3" strokeWidth="2.500" />
        </StatusButton>
        <StatusButton label="Flash">
          <circle cx="6" cy="9" r="3" strokeWidth="1" />
          <path d="M11 9h5" />
        </StatusButton>
        <StatusButton label="Transparency">
          <path d="M3 3h10v10H3z" fill="#f4513c" stroke="none" />
          <path d="M7 7h10v10H7z" stroke="none" fill={BLUE} />
          <path d="M6 6h8v8H6z" fill="#ff8cf0" stroke="none" />
        </StatusButton>
        <StatusButton label="Fit">
          <path d="M2 2h16v16H2z" fill="#fff" strokeWidth="2" />
          <path d="M5 14l4-5 3 4 3-4" />
        </StatusButton>
      </div>
      <div className="relative">
        <select
          aria-label="Zoom"
          className="block h-[21px] w-[84px] appearance-none bg-[#d4d4d4] pl-px text-[#222]">
          <option>68.33%</option>
        </select>
        <SelectArrow />
      </div>
      <button type="button" aria-label="Zoom out" className="ml-2 text-[#bbb]">
        <Minus className="h-3 w-3" />
      </button>
      <input
        type="range"
        aria-label="Zoom level"
        defaultValue={7}
        className="ml-3 h-5 min-w-0 flex-1 appearance-none bg-transparent [&::-webkit-slider-runnable-track]:h-px [&::-webkit-slider-runnable-track]:bg-[#999] [&::-webkit-slider-thumb]:-mt-2 [&::-webkit-slider-thumb]:h-[18px] [&::-webkit-slider-thumb]:w-1 [&::-webkit-slider-thumb]:appearance-none [&::-webkit-slider-thumb]:bg-[#d4d4d4]"
      />
      <button type="button" aria-label="Zoom in" className="ml-3 text-[#bbb]">
        <Plus className="h-3 w-3" />
      </button>
      <svg className="mt-auto ml-3 mr-1 mb-1 h-2.5 w-2.5" viewBox="0 0 10 10" fill="#bbb">
        <path d="M0 8h2v2H0zM4 8h2v2H4zM8 8h2v2H8zM4 4h2v2H4zM8 4h2v2H8zM8 0h2v2H8z" />
      </svg>
    </footer>
  );
}

function StatusButton({ label, children }: LabelledProps) {
  return (
    <button type="button" aria-label={label}>
      <svg
        className="h-5 w-5"
        viewBox="0 0 20 20"
        fill="none"
        stroke={BLUE}
        strokeWidth="1.500">
        {children}
      </svg>
    </button>
  );
}

/* ---------- options dialog ---------- */

function OptionsDialog() {
  return (
    <div
      role="dialog"
      aria-label="Options"
      className="absolute top-[68px] left-[349px] flex w-[762px] flex-col border border-[#4d4d4d] bg-[#696969] shadow-[0_3px_12px_rgba(0,0,0,0.5)]">
      <div className="flex h-7 items-center justify-between border-b border-[#555] bg-white pr-2.5 pl-0.5 text-black">
        <h2>Options</h2>
        <button type="button" aria-label="Close">
          <X className="h-4 w-4" strokeWidth={1.5} />
        </button>
      </div>

      <div className="flex h-[570px] border-b border-[#4d4d4d]">
        <div className="flex w-[97px] shrink-0 flex-col bg-[#d4d4d4]">
          <div className="min-h-0 flex-1 overflow-hidden">
            <ul className="mt-px grid h-[257px] auto-rows-fr text-black">
              {TREE.map(({ label, root, selected }, i) => (
                <li key={i} className={clsx('whitespace-nowrap', root && '-ml-[9px]')}>
                  <button
                    type="button"
                    className={clsx(
                      'px-0.5 leading-5',
                      selected && 'bg-[#979797]'
                    )}>
                    {label}
                  </button>
                </li>
              ))}
            </ul>
          </div>
          <div className="flex h-5 bg-[#505050]">
            <ScrollButton dir="left" />
            <div className="ml-4 flex-1 bg-[#999]" />
            <ScrollButton dir="right" />
          </div>
        </div>

        <div className="ml-5 flex w-[613px] flex-col font-['Liberation_Mono',monospace] text-xs">
          <h3 className="h-[38px] shrink-0 leading-[42px] text-[#dcdcdc]">
            Advanced Format Settings
          </h3>
          <div className="flex h-[498px] flex-col overflow-hidden border border-[#8f8f8f] bg-[#b6b6b6]">
            <div className="flex h-[34px] shrink-0 items-center px-1.5">
              <GridToolbar id="settings-search" />
            </div>
            <div className="flex h-[22px] shrink-0 items-center border-y border-[#999] bg-[#a9a9a9] text-[#333]">
              <span className="w-[306px] pl-1">Setting</span>
              <span className="h-full flex-1 border-l border-[#888] pl-1 leading-[21px]">
                Value
              </span>
            </div>
            <div className="flex min-h-0 flex-1">
              <div className="min-w-0 flex-1 overflow-hidden pt-px">
                <SettingsTable />
              </div>
              <ScrollBar vertical thumb="h-[84%]" />
            </div>
          </div>
        </div>
      </div>

      <div className="flex h-[42px] justify-end gap-2 pt-[3px] pr-1.5">
        {['确定', '取消', '帮助'].map((label, i) => (
          <button
            key={label}
            type="button"
            className={clsx(
              "h-8 w-[108px] border bg-[#d4d4d4] font-['Noto_Sans_CJK_SC',sans-serif] text-[13px] font-light text-[#333]",
              i === 0 ? 'border-[#33528a]' : 'border-[#444]'
            )}>
            {label}
          </button>
        ))}
      </div>
    </div>
  );
}

function SettingsTable() {
  return (
    <table className="h-[443px] w-full table-fixed border-collapse text-left text-[#333]">
      <colgroup>
        <col className="w-[19px]" />
        <col className="w-[287px]" />
        <col />
      </colgroup>
      {SETTINGS.map(({ title, rows }, g) => (
        <tbody key={title}>
          <tr>
            <td className="p-0">
              <Expander />
            </td>
            <th colSpan={2} className="p-0 pl-1 text-[13px] leading-4 text-[#222]">
              {title}
            </th>
          </tr>
          {rows.map(([name, value], i) => {
            const shade = (i + g) % 2 === 0 ? 'bg-[#c8c8c8]' : 'bg-[#d4d4d4]';

            return (
              <tr key={name}>
                <td className="p-0" />
                <td className={clsx('p-0 pl-1 leading-4 whitespace-nowrap', shade)}>
                  {name}
                </td>
                <td
                  className={clsx(
                    'border-l border-[#b4b4b4] p-0 pl-[3px] leading-4',
                    shade
                  )}>
                  {typeof value === 'boolean' ? (
                    <Switch label={name} initial={value} />
                  ) : (
                    value
                  )}
                </td>
              </tr>
            );
          })}
        </tbody>
      ))}
    </table>
  );
}
